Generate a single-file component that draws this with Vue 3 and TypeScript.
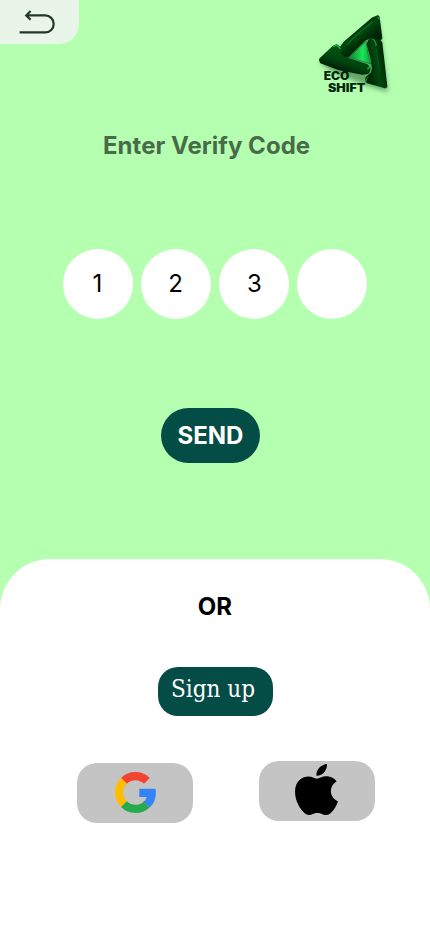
<script setup lang="ts">
import { ref } from 'vue'

const code = ref<string[]>(['1', '2', '3', ''])
</script>

<template>
  <main class="screen">
    <header class="top">
      <button class="back" aria-label="Back">
        <svg width="79" height="44" viewBox="0 0 79 44" fill="none" stroke="#22382a" stroke-width="2.2">
          <path d="M19.6 32.4H45.2a8.5 8.5 0 0 0 0-17H27" />
          <path d="M30.6 11l-4.4 4.4L30.6 19.8" />
        </svg>
      </button>
      <svg class="logo" width="100" height="100" viewBox="0 0 300 300">
        <defs>
          <linearGradient id="armTop" x1="150" y1="75" x2="180" y2="115" gradientUnits="userSpaceOnUse">
            <stop offset="0" stop-color="#002e08" />
            <stop offset=".3" stop-color="#00480f" />
            <stop offset="1" stop-color="#002405" />
          </linearGradient>
          <linearGradient id="armRight" x1="190" y1="170" x2="245" y2="160" gradientUnits="userSpaceOnUse">
            <stop offset="0" stop-color="#002a06" />
            <stop offset=".4" stop-color="#01480f" />
            <stop offset="1" stop-color="#002004" />
          </linearGradient>
          <linearGradient id="armLeft" x1="115" y1="150" x2="100" y2="195" gradientUnits="userSpaceOnUse">
            <stop offset="0" stop-color="#004f10" />
            <stop offset=".45" stop-color="#00420d" />
            <stop offset="1" stop-color="#001f04" />
          </linearGradient>
          <linearGradient id="core" x1="135" y1="150" x2="198" y2="150" gradientUnits="userSpaceOnUse">
            <stop offset="0" stop-color="#0b8a2c" />
            <stop offset=".6" stop-color="#1ce55c" />
            <stop offset="1" stop-color="#08a334" />
          </linearGradient>
          <filter id="soft" x="-30%" y="-30%" width="160%" height="160%"><feGaussianBlur stdDeviation="8" /></filter>
          <filter id="shine" x="-50%" y="-50%" width="200%" height="200%"><feGaussianBlur stdDeviation="1.6" /></filter>
        </defs>
        <path d="M45 172L220 45L249 260L180 240L80 200Z" fill="#174d20" opacity=".5" filter="url(#soft)" />
        <g stroke-linejoin="round" stroke-width="12">
          <path d="M196 106L214 102L226 114L241 244L188 229L187 220L203 206L207 190L202 158L191 118Z" fill="url(#armRight)" stroke="url(#armRight)" />
          <path d="M218 37L205 42L120 115L107 133L106 150L126 153L179 101L194 94L226 99Z" fill="url(#armTop)" stroke="url(#armTop)" />
          <path d="M48 164L87 127L95 124L103 132L101 147L112 159L184 183L191 190L188 201L172 203L100 189L50 170Z" fill="url(#armLeft)" stroke="url(#armLeft)" />
        </g>
        <path d="M183 110Q187 146 198 177L132 157Z" fill="url(#core)" stroke="#03601a" stroke-width="1.5" stroke-linejoin="round" />
        <g fill="none" stroke-linecap="round" filter="url(#shine)">
          <path d="M202 52Q158 84 126 119" stroke="#00701a" stroke-width="4" />
          <path d="M86 124Q99 117 105 131" stroke="#1fae3e" stroke-width="4" />
          <path d="M203 102Q213 108 213 122" stroke="#139a31" stroke-width="4" />
          <path d="M214 132L223 195" stroke="#00611a" stroke-width="3" />
          <path d="M188 191Q195 189 193 182" stroke="#19b43a" stroke-width="4" />
          <path d="M218 37L222 42" stroke="#1ab33c" stroke-width="3" />
          <path d="M189 216Q184 220 183 228" stroke="#0b942b" stroke-width="3" />
        </g>
        <text class="brand">
          <tspan x="56" y="224" textLength="77" lengthAdjust="spacingAndGlyphs">ECO</tspan>
          <tspan x="69" y="260" textLength="112" lengthAdjust="spacingAndGlyphs">SHIFT</tspan>
        </text>
      </svg>
    </header>

    <h1 class="title">Enter Verify Code</h1>
    <div class="digits">
      <span v-for="(digit, i) in code" :key="i" class="digit">{{ digit }}</span>
    </div>
    <button class="send">SEND</button>

    <section class="sheet">
      <p class="or">OR</p>
      <button class="signup">Sign up</button>
      <div class="providers">
        <button class="provider google" aria-label="Google">
          <svg width="41" height="41" viewBox="0 0 41 41" fill="none" stroke-width="8.2">
            <path d="M31.9 8.9A16.4 16.4 0 0 0 8.9 8.9" stroke="#f2442e" />
            <path d="M8.9 8.9A16.4 16.4 0 0 0 8.9 32.1" stroke="#ffbd00" />
            <path d="M8.9 32.1A16.4 16.4 0 0 0 31.7 32.4" stroke="#27aa4b" />
            <path d="M24.3 16.8H40.6C41.6 24.6 39.8 31 34.7 35.5L28.5 29.7Q31 27.8 31.8 24.9H24.3Z" fill="#3484f8" />
          </svg>
        </button>
        <button class="provider apple" aria-label="Apple">
          <svg width="43" height="51" viewBox="2.2 0 19.6 24" preserveAspectRatio="none">
            <path d="M12.152 6.896c-.948 0-2.415-1.078-3.96-1.04-2.04.027-3.91 1.183-4.961 3.014-2.117 3.675-.546 9.103 1.519 12.09 1.013 1.454 2.208 3.09 3.792 3.039 1.52-.065 2.09-.987 3.935-.987 1.831 0 2.35.987 3.96.948 1.637-.026 2.676-1.48 3.676-2.948 1.156-1.688 1.636-3.325 1.662-3.415-.039-.013-3.182-1.221-3.22-4.857-.026-3.04 2.48-4.494 2.597-4.559-1.429-2.09-3.623-2.324-4.39-2.376-2-.156-3.675 1.09-4.61 1.09zM15.53 3.83c.843-1.012 1.4-2.427 1.245-3.83-1.207.052-2.662.805-3.532 1.818-.78.896-1.454 2.338-1.273 3.714 1.338.104 2.715-.688 3.559-1.701" />
          </svg>
        </button>
      </div>
    </section>
  </main>
</template>

<style>
body {
  margin: 0;
}
</style>

<style scoped>
.screen {
  display: flex;
  flex-direction: column;
  width: 430px;
  height: 932px;
  overflow: hidden;
  background: #b5ffb0;
  font-family: Inter, sans-serif;
}
button {
  display: block;
  padding: 0;
  border: 0;
  font: inherit;
}
svg {
  display: block;
}
.top {
  display: flex;
  align-items: flex-start;
  justify-content: space-between;
  height: 131px;
}
.back {
  width: 79px;
  height: 44px;
  border-radius: 0 0 20px 0;
  background: #e8f5e8;
}
.logo {
  margin: 5px 25px 0 0;
}
.brand {
  font-size: 34px;
  font-weight: 900;
  fill: #04270b;
}
.title {
  margin: 0 0 0 103px;
  font-size: 24px;
  line-height: 29px;
  font-weight: 700;
  letter-spacing: 0.03px;
  color: #486b49;
}
.digits {
  display: flex;
  gap: 8px;
  margin: 89px 0 0 63px;
}
.digit {
  box-sizing: border-box;
  width: 70px;
  height: 70px;
  padding-right: 1px;
  border-radius: 50%;
  background: #fff;
  font-size: 24px;
  line-height: 70px;
  text-align: center;
}
.digit:nth-child(3) {
  padding: 0 0 0 1px;
}
.send {
  width: 99px;
  height: 55px;
  margin: 89px 0 0 161px;
  border-radius: 28px;
  background: #044c46;
  color: #fff;
  font-size: 24px;
  font-weight: 700;
}
.sheet {
  flex: 1;
  margin-top: 96px;
  border-radius: 50px 50px 0 0;
  background: #fff;
}
.or {
  margin: 33px 0 0;
  font-size: 24px;
  line-height: 29px;
  font-weight: 700;
  text-align: center;
}
.signup {
  width: 115px;
  height: 49px;
  margin: 46px 0 0 158px;
  padding: 0 5px 6px 0;
  border-radius: 20px;
  background: #044c46;
  color: #fff;
  font-family: "DejaVu Serif Condensed", "DejaVu Serif", serif;
  font-size: 24px;
  white-space: nowrap;
}
.providers {
  display: flex;
  align-items: flex-start;
  gap: 66px;
  margin: 45px 0 0 77px;
}
.provider {
  box-sizing: border-box;
  display: flex;
  justify-content: center;
  width: 116px;
  height: 60px;
  border-radius: 20px;
  background: #c4c4c4;
}
.google {
  margin-top: 2px;
  padding-top: 9px;
}
.apple {
  padding: 3px 2px 0 0;
}
</style>
